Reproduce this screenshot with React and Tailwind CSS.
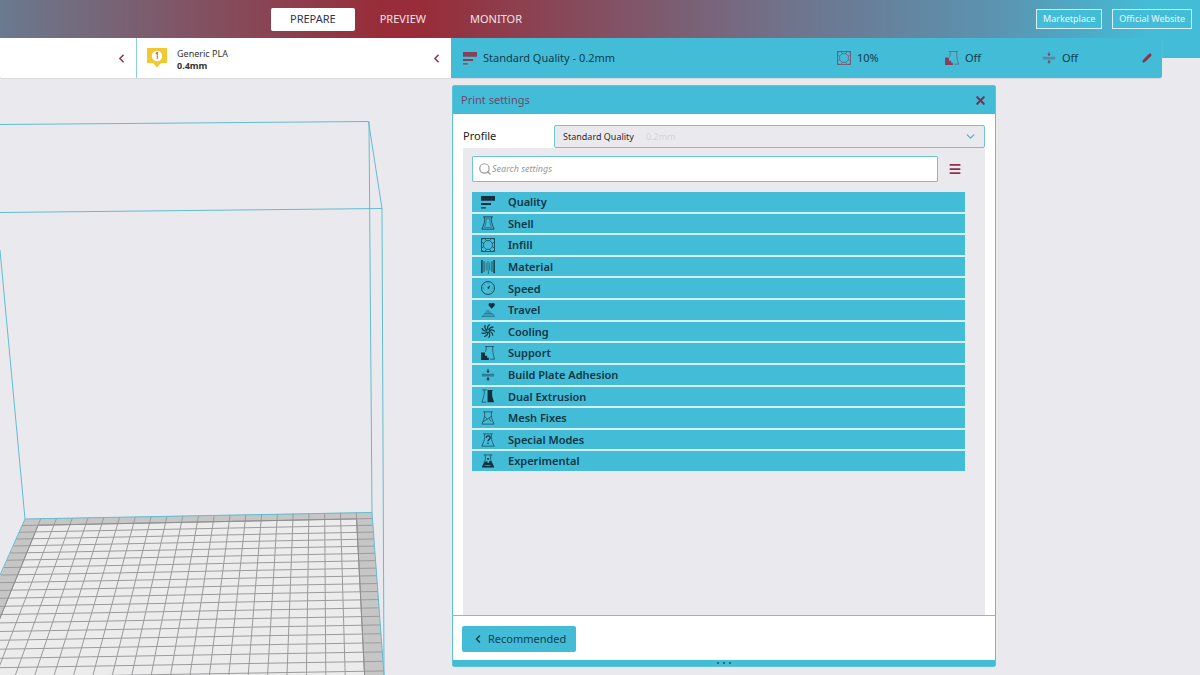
import React, { useState } from "react";
import { ChevronLeft, ChevronDown, Menu, Pencil, Search, X } from "lucide-react";

function Icon({ size = 14, className = "", children }) {
  return (
    <svg
      width={size}
      height={size}
      viewBox="0 0 16 16"
      fill="none"
      stroke="currentColor"
      strokeWidth="0.9"
      className={`shrink-0 ${className}`}
      aria-hidden="true"
    >
      {children}
    </svg>
  );
}

const glyphs = {
  quality: (
    <g fill="currentColor" stroke="none">
      <path d="M0 1h16v5.500H0zM0 9h11.500v2.500H0zM0 14h5.500v1.500H0z" />
    </g>
  ),
  shell: (
    <>
      <path d="M2.500 1h11M4 1c.8 5-.5 8.500-3 14h14c-2.500-5.500-3.800-9-3-14" />
      <path d="M6 3c.3 3.500-.6 6.500-2.200 10h8.400C10.600 9.500 9.700 6.500 10 3z" strokeWidth="0.5" />
    </>
  ),
  infill: (
    <g strokeWidth="0.7">
      <path d="M.5.5h15v15H.5z" strokeWidth="0.9" />
      <path d="M6 3h4l3 3v4l-3 3H6l-3-3V6z" />
      <path d="M6 3L4.500.5M10 3l1.500-2.500M13 6l2.500-1.500M13 10l2.500 1.500M10 13l1.500 2.500M6 13l-1.500 2.500M3 10L.5 11.500M3 6L.5 4.500" />
      <path d="M.5 2.500l2-2M13.500.5l2 2M.5 13.500l2 2M15.500 13.500l-2 2" />
    </g>
  ),
  material: (
    <>
      <path d="M1 0v15M15 0v15" strokeWidth="1.6" />
      <path d="M3.500 1.500v12M12.500 1.500v12" strokeWidth="0.9" />
      <path d="M6 3v9M8 1v11M10 3v9M8.500 12v4" strokeWidth="0.6" />
    </>
  ),
  speed: (
    <>
      <circle cx="8" cy="8" r="7.400" />
      <path d="M10.500 4.500L9.200 9 7 8z" fill="currentColor" stroke="none" />
      <path d="M8 2v1M2 8h1M13 8h1M4 4l.7.7M12 12l-.7-.7" strokeWidth="0.6" />
    </>
  ),
  travel: (
    <>
      <path d="M12.200 6.500L9 3.200C8 1.500 9 0 10.500 0c.9 0 1.700.8 1.700.8s.8-.8 1.700-.8c1.500 0 2.500 1.500 1.500 3.200z" fill="currentColor" stroke="none" />
      <path d="M1 15.500h14v-1.800H3zM3.500 12h10M5 10.400h6.500M6.500 8.800h3" strokeWidth="0.5" />
    </>
  ),
  cooling: (
    <g strokeWidth="1.3">
      {[0, 40, 80, 120, 160, 200, 240, 280, 320].map((angle) => (
        <path key={angle} d="M8 6.800C7 4.500 7.500 2 10 .6" transform={`rotate(${angle} 8 8)`} />
      ))}
    </g>
  ),
  support: (
    <>
      <path d="M0 7.500h4.500v3.500H7v2.500h2V16H0z" fill="currentColor" stroke="none" />
      <path d="M4.500.5h10.500M6 .5c0 2.500 0 4-.8 6M13.500.5c-.5 5 .2 9 2 14.500h-5" strokeWidth="0.7" />
    </>
  ),
  adhesion: (
    <>
      <path d="M1 7.200h4.500l1 .5h3l1-.5H15M1 9h14" strokeWidth="0.7" />
      <path d="M8 1v4M8 11v4" strokeWidth="0.8" />
      <path d="M8 6L6 3h4zM8 10.200l-2 3h4z" fill="currentColor" stroke="none" />
    </>
  ),
  dual: (
    <>
      <path d="M1.500 1H6.500M3.500 1c.8 5-.5 8.500-2.500 14h5" strokeWidth="0.7" />
      <path d="M7.500 1h6v1h-.8c-.3 5 .3 8 2.300 13H7.500z" fill="currentColor" stroke="none" />
    </>
  ),
  mesh: (
    <g strokeWidth="0.7">
      <path d="M2.500 1h11M4 1c.8 5-.5 8.500-3 14h14c-2.500-5.500-3.800-9-3-14" />
      <path d="M4 6l3 3.500L9 8l2.500 4M2.500 12L7 9.500M9 8l3-2" />
    </g>
  ),
  special: (
    <>
      <path d="M2.500 1h11M4 1c.8 5-.5 8.500-3 14h14c-2.500-5.500-3.800-9-3-14" strokeWidth="0.7" />
      <path d="M6 5.500c0-3 4.500-3 4.500 0 0 2-2.500 2-2.500 4" strokeWidth="1.4" />
      <path d="M7.200 11h1.600v1.600H7.200z" fill="currentColor" stroke="none" />
    </>
  ),
  experimental: (
    <>
      <path d="M3 1h10M5 1v5.500L1.500 15h13L11 6.500V1" strokeWidth="0.7" />
      <path d="M4.500 8.500h3v1.500h2V8h2L15 15H1z" fill="currentColor" stroke="none" />
      <path d="M7 4.500h2v2H7z" fill="currentColor" stroke="none" />
      <path d="M4 13h7" stroke="#43bcd8" strokeWidth="0.8" />
    </>
  ),
};

const categories = [
  { name: "Quality", icon: "quality" },
  { name: "Shell", icon: "shell" },
  { name: "Infill", icon: "infill" },
  { name: "Material", icon: "material" },
  { name: "Speed", icon: "speed" },
  { name: "Travel", icon: "travel" },
  { name: "Cooling", icon: "cooling" },
  { name: "Support", icon: "support" },
  { name: "Build Plate Adhesion", icon: "adhesion" },
  { name: "Dual Extrusion", icon: "dual" },
  { name: "Mesh Fixes", icon: "mesh" },
  { name: "Special Modes", icon: "special" },
  { name: "Experimental", icon: "experimental" },
];

const tabs = ["PREPARE", "PREVIEW", "MONITOR"];

// Build plate in perspective, 22 cells wide
const COLS = 22;
const ROWS = 22;
const backX = (i) => 25 + (347 * i) / COLS;
const backY = (i) => 519 - (7 * i) / COLS;
const frontX = (i) => 384 - 19.4 * (COLS - i);
const depth = (j) => (6.5 * j) / (1 - 0.0091 * j);

function gridPoint(i, j) {
  const y = backY(i) + depth(j);
  const t = (y - backY(i)) / (675 - backY(i));
  return [backX(i) + (frontX(i) - backX(i)) * t, y];
}

function poly(...corners) {
  return corners.map(([i, j]) => gridPoint(i, j).join(",")).join(" ");
}

function gridLine(from, to) {
  const [x1, y1] = gridPoint(...from);
  const [x2, y2] = gridPoint(...to);
  return { x1, y1, x2, y2 };
}

function BuildVolume() {
  return (
    <svg className="absolute left-0 top-0" width="452" height="675" aria-hidden="true">
      <polygon points={poly([0, 0], [COLS, 0], [COLS, ROWS], [0, ROWS])} fill="#c6c6c7" />
      <polygon points={poly([1, 1], [21, 1], [21, ROWS], [1, ROWS])} fill="#ececed" />
      <g stroke="#9b9b9c" strokeWidth="1">
        {Array.from({ length: COLS - 1 }, (_, k) => (
          <line key={`c${k}`} {...gridLine([k + 1, 0], [k + 1, ROWS])} />
        ))}
        {Array.from({ length: ROWS }, (_, k) => (
          <line key={`r${k}`} {...gridLine([0, k + 1], [COLS, k + 1])} />
        ))}
      </g>
      <g stroke="#8e8e8f" strokeWidth="1">
        <line {...gridLine([1, 1], [1, ROWS])} />
        <line {...gridLine([21, 1], [21, ROWS])} />
        <line {...gridLine([1, 1], [21, 1])} />
      </g>
      <g fill="none" stroke="#62bccf" strokeWidth="1">
        <path d="M0 124.500L368.500 121.500L382 208.500L384 675" />
        <path d="M0 212.500L382 208.500" />
        <path d="M369 121.500L372 512.500L384 675" />
        <path d="M0 250L25 519L372 512.500" />
        <path d="M25 519L0 575" />
      </g>
    </svg>
  );
}

function StageSetting({ icon, value, className }) {
  return (
    <div className={`flex items-center gap-1.5 ${className}`}>
      <Icon className="text-[#85405a]">{glyphs[icon]}</Icon>
      <span>{value}</span>
    </div>
  );
}

function Header({ active, onSelect }) {
  return (
    <header className="h-[58px] bg-[linear-gradient(90deg,#6a7a8f_0%,#982c38_32%,#982c38_35%,#70728a_65%,#5b93b0_83%,#43bcd8_96%)]">
      <div className="flex h-[38px] items-center justify-between pl-[271px] pr-2">
        <nav className="flex gap-1.5">
          {tabs.map((tab) => (
            <button
              key={tab}
              onClick={() => onSelect(tab)}
              className={`h-[23px] rounded-[2px] px-[19px] text-[11px] ${
                tab === active ? "bg-white text-[#2f3357]" : "text-[#f3e3e6]"
              }`}
            >
              {tab}
            </button>
          ))}
        </nav>
        <div className="flex gap-2.5 text-[9px] text-[#e6f8fc]">
          <button className="h-5 border border-[#d5f1f7] bg-[#43bcd8] px-1.5">Marketplace</button>
          <button className="h-5 border border-[#d5f1f7] bg-[#43bcd8] px-1.5">Official Website</button>
        </div>
      </div>
    </header>
  );
}

function StageBar() {
  return (
    <div className="relative -mt-5 mr-[38px] flex h-10 rounded-b-[2px] bg-white shadow-[0_1px_1px_#d9dade]">
      <button className="flex w-[137px] items-center justify-end border-r border-[#8fcfdb] pr-2" aria-label="Collapse printer">
        <ChevronLeft size={13} strokeWidth={3} className="text-[#8d3950]" />
      </button>
      <div className="flex w-[314px] items-center pl-2.5 pr-2">
        <svg width="20" height="20" viewBox="0 0 20 20" className="shrink-0" aria-hidden="true">
          <path d="M0 0h20v15h-6l-4 4.500L6 15H0z" fill="#f3c72f" />
          <circle cx="10" cy="8" r="5.200" fill="#fff" />
          <text x="10" y="11" textAnchor="middle" fontSize="8" fill="#444">1</text>
        </svg>
        <div className="ml-2.5 flex-1 pt-1 text-[9px] leading-3 text-[#333]">
          <div>Generic PLA</div>
          <div className="font-bold">0.4mm</div>
        </div>
        <button aria-label="Collapse material">
          <ChevronLeft size={13} strokeWidth={3} className="text-[#8d3950]" />
        </button>
      </div>
      <div className="flex flex-1 items-center rounded-br-[2px] bg-[#43bcd8] pl-3 pr-2.5 text-[11px] text-[#0f3d4b]">
        <StageSetting icon="quality" value="Standard Quality - 0.2mm" className="flex-1" />
        <StageSetting icon="infill" value="10%" className="w-[108px]" />
        <StageSetting icon="support" value="Off" className="w-[97px]" />
        <StageSetting icon="adhesion" value="Off" className="w-[100px]" />
        <button aria-label="Edit print settings">
          <Pencil size={10} fill="currentColor" className="text-[#8f2f49]" />
        </button>
      </div>
    </div>
  );
}

function PrintSettings() {
  const [query, setQuery] = useState("");

  const visible = categories.filter((c) => c.name.toLowerCase().includes(query.toLowerCase()));

  return (
    <section className="relative mb-2 ml-[452px] mt-[7px] flex w-[544px] flex-1 flex-col rounded-[2px] border border-[#5fc3d8] bg-white">
      <div className="flex h-7 items-center justify-between bg-[#43bcd8] pl-2 pr-2">
        <h2 className="text-[11px] text-[#6b4a70]">Print settings</h2>
        <button aria-label="Close">
          <X size={13} strokeWidth={4} className="text-[#85304e]" />
        </button>
      </div>

      <div className="flex flex-1 flex-col px-2.5 pt-[11px]">
        <div className="flex items-center">
          <label htmlFor="profile" className="w-[91px] text-[11px] text-[#222]">
            Profile
          </label>
          <div className="relative flex-1">
            <select
              id="profile"
              className="block h-[23px] w-full appearance-none rounded-[2px] border border-[#6fc4d5] bg-[#eaeaee] pl-2 text-[9px] text-[#2b2b2b]"
            >
              <option>Standard Quality</option>
            </select>
            <span className="pointer-events-none absolute inset-y-0 left-[92px] flex items-center text-[9px] text-[#d3d5d8]">
              0.2mm
            </span>
            <ChevronDown
              size={13}
              strokeWidth={2.5}
              className="pointer-events-none absolute inset-y-0 right-2 my-auto text-[#58b4c8]"
            />
          </div>
        </div>

        <div className="flex-1 bg-[#eaeaee] pl-[9px] pr-5 pt-2">
          <div className="flex items-center gap-2.5">
            <label className="flex h-[26px] w-[466px] items-center rounded-[1px] border border-[#6fc4d5] bg-white pl-[5px]">
              <Search size={14} className="shrink-0 text-[#999]" />
              <input
                type="text"
                aria-label="Search settings"
                placeholder="Search settings"
                value={query}
                onChange={(e) => setQuery(e.target.value)}
                className="w-full text-[9px] italic outline-none placeholder:text-[#999]"
              />
            </label>
            <button aria-label="Setting visibility">
              <Menu size={14} strokeWidth={3} className="text-[#8f2f49]" />
            </button>
          </div>

          <ul className="mt-2.5 grid h-[279px] grid-rows-13 gap-0.5 bg-[#d5f1f7]">
            {visible.map((c) => (
              <li key={c.name} className="bg-[#43bcd8]">
                <button className="flex h-full w-full items-center gap-[13px] pl-[9px] text-left text-[11px] font-semibold text-[#0f3644]">
                  <Icon className="text-[#12303b]">{glyphs[c.icon]}</Icon>
                  <span className="pt-px">{c.name}</span>
                </button>
              </li>
            ))}
          </ul>
        </div>
      </div>

      <div className="border-t border-[#6fc4d5] px-[9px] pb-2 pt-2.5">
        <button className="flex h-[26px] items-center gap-1 rounded-[2px] bg-[#43bcd8] px-2.5 text-[11px] text-[#0f3d4b]">
          <ChevronLeft size={12} strokeWidth={3} />
          Recommended
        </button>
      </div>
      <div className="flex h-1.5 items-center justify-center gap-1 bg-[#43bcd8]">
        <span className="size-0.5 rounded-full bg-[#14566a]" />
        <span className="size-0.5 rounded-full bg-[#14566a]" />
        <span className="size-0.5 rounded-full bg-[#14566a]" />
      </div>
    </section>
  );
}

export default function App() {
  const [active, setActive] = useState("PREPARE");

  return (
    <div className="relative flex min-h-screen flex-col overflow-hidden bg-[#eaeaee] font-['Noto_Sans',sans-serif]">
      <BuildVolume />
      <Header active={active} onSelect={setActive} />
      <StageBar />
      <PrintSettings />
    </div>
  );
}
